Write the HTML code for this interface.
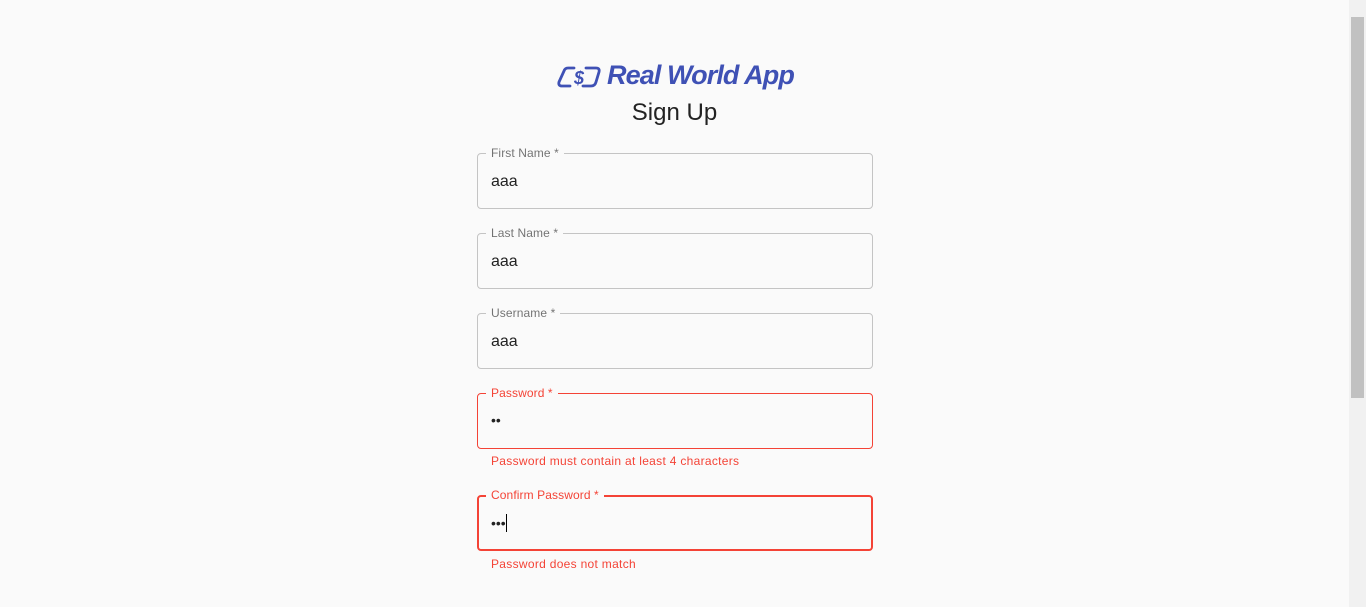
<!DOCTYPE html>
<html><head><style>
body{margin:0;width:1366px;height:607px;background:#fafafa;font-family:"Liberation Sans",Arial,sans-serif;overflow:hidden;position:relative}
.sb{position:absolute;right:0;top:0;width:17px;height:607px;background:#f1f1f1}
.th{position:absolute;left:2px;top:17px;width:13px;height:381px;background:#c1c1c1}
.f{position:absolute;left:477px;width:396px;height:56px;box-sizing:border-box;border:1px solid #c4c4c4;border-radius:4px}
.f.e{border-color:#f44336}
.f.e2{border:2px solid #f44336}
.l{position:absolute;left:8px;top:-8px;background:#fafafa;padding:0 5px;font-size:12px;color:rgba(0,0,0,.55);line-height:14px;letter-spacing:.1px}
.e .l,.e2 .l{color:#f44336}
.v{position:absolute;left:13px;top:19px;font-size:16px;color:#222}
.h{position:absolute;left:491px;font-size:12px;color:#f44336;letter-spacing:.3px}
</style></head><body>
<svg style="position:absolute;left:556px;top:64px" width="46" height="26" viewBox="0 0 46 26"><g fill="none" stroke="#3f51b5" stroke-width="2.8" stroke-linecap="round" stroke-linejoin="round"><path d="M18 4H12Q9 4 8 7L3 18Q2 22 6 22H14"/><path d="M30 4H40Q44 4 43 8L40 18Q39 22 35 22H27"/></g><text x="23" y="20" font-family="Liberation Sans" font-weight="bold" font-style="italic" font-size="18" fill="#3f51b5" text-anchor="middle">$</text></svg>
<div style="position:absolute;left:607px;top:60px;font-size:27px;font-weight:bold;font-style:italic;color:#3f51b5;letter-spacing:-0.9px">Real World App</div>
<div style="position:absolute;left:0;width:1349px;top:99px;text-align:center;font-size:24px;color:#222">Sign Up</div>
<div class="f" style="top:153px"><span class="l">First Name *</span><span class="v">aaa</span></div>
<div class="f" style="top:233px"><span class="l">Last Name *</span><span class="v">aaa</span></div>
<div class="f" style="top:313px"><span class="l">Username *</span><span class="v">aaa</span></div>
<div class="f e" style="top:393px"><span class="l">Password *</span><span class="v" style="font-size:14px;top:18px">••</span></div>
<div class="h" style="top:454px">Password must contain at least 4 characters</div>
<div class="f e2" style="top:495px"><span class="l" style="left:7px;top:-9px">Confirm Password *</span><span class="v" style="font-size:14px;top:17px;left:12px">•••<span style="display:inline-block;width:1px;height:18px;background:#000;vertical-align:-4px"></span></span></div>
<div class="h" style="top:557px">Password does not match</div>
<div class="sb"><div class="th"></div></div>
</body></html>
